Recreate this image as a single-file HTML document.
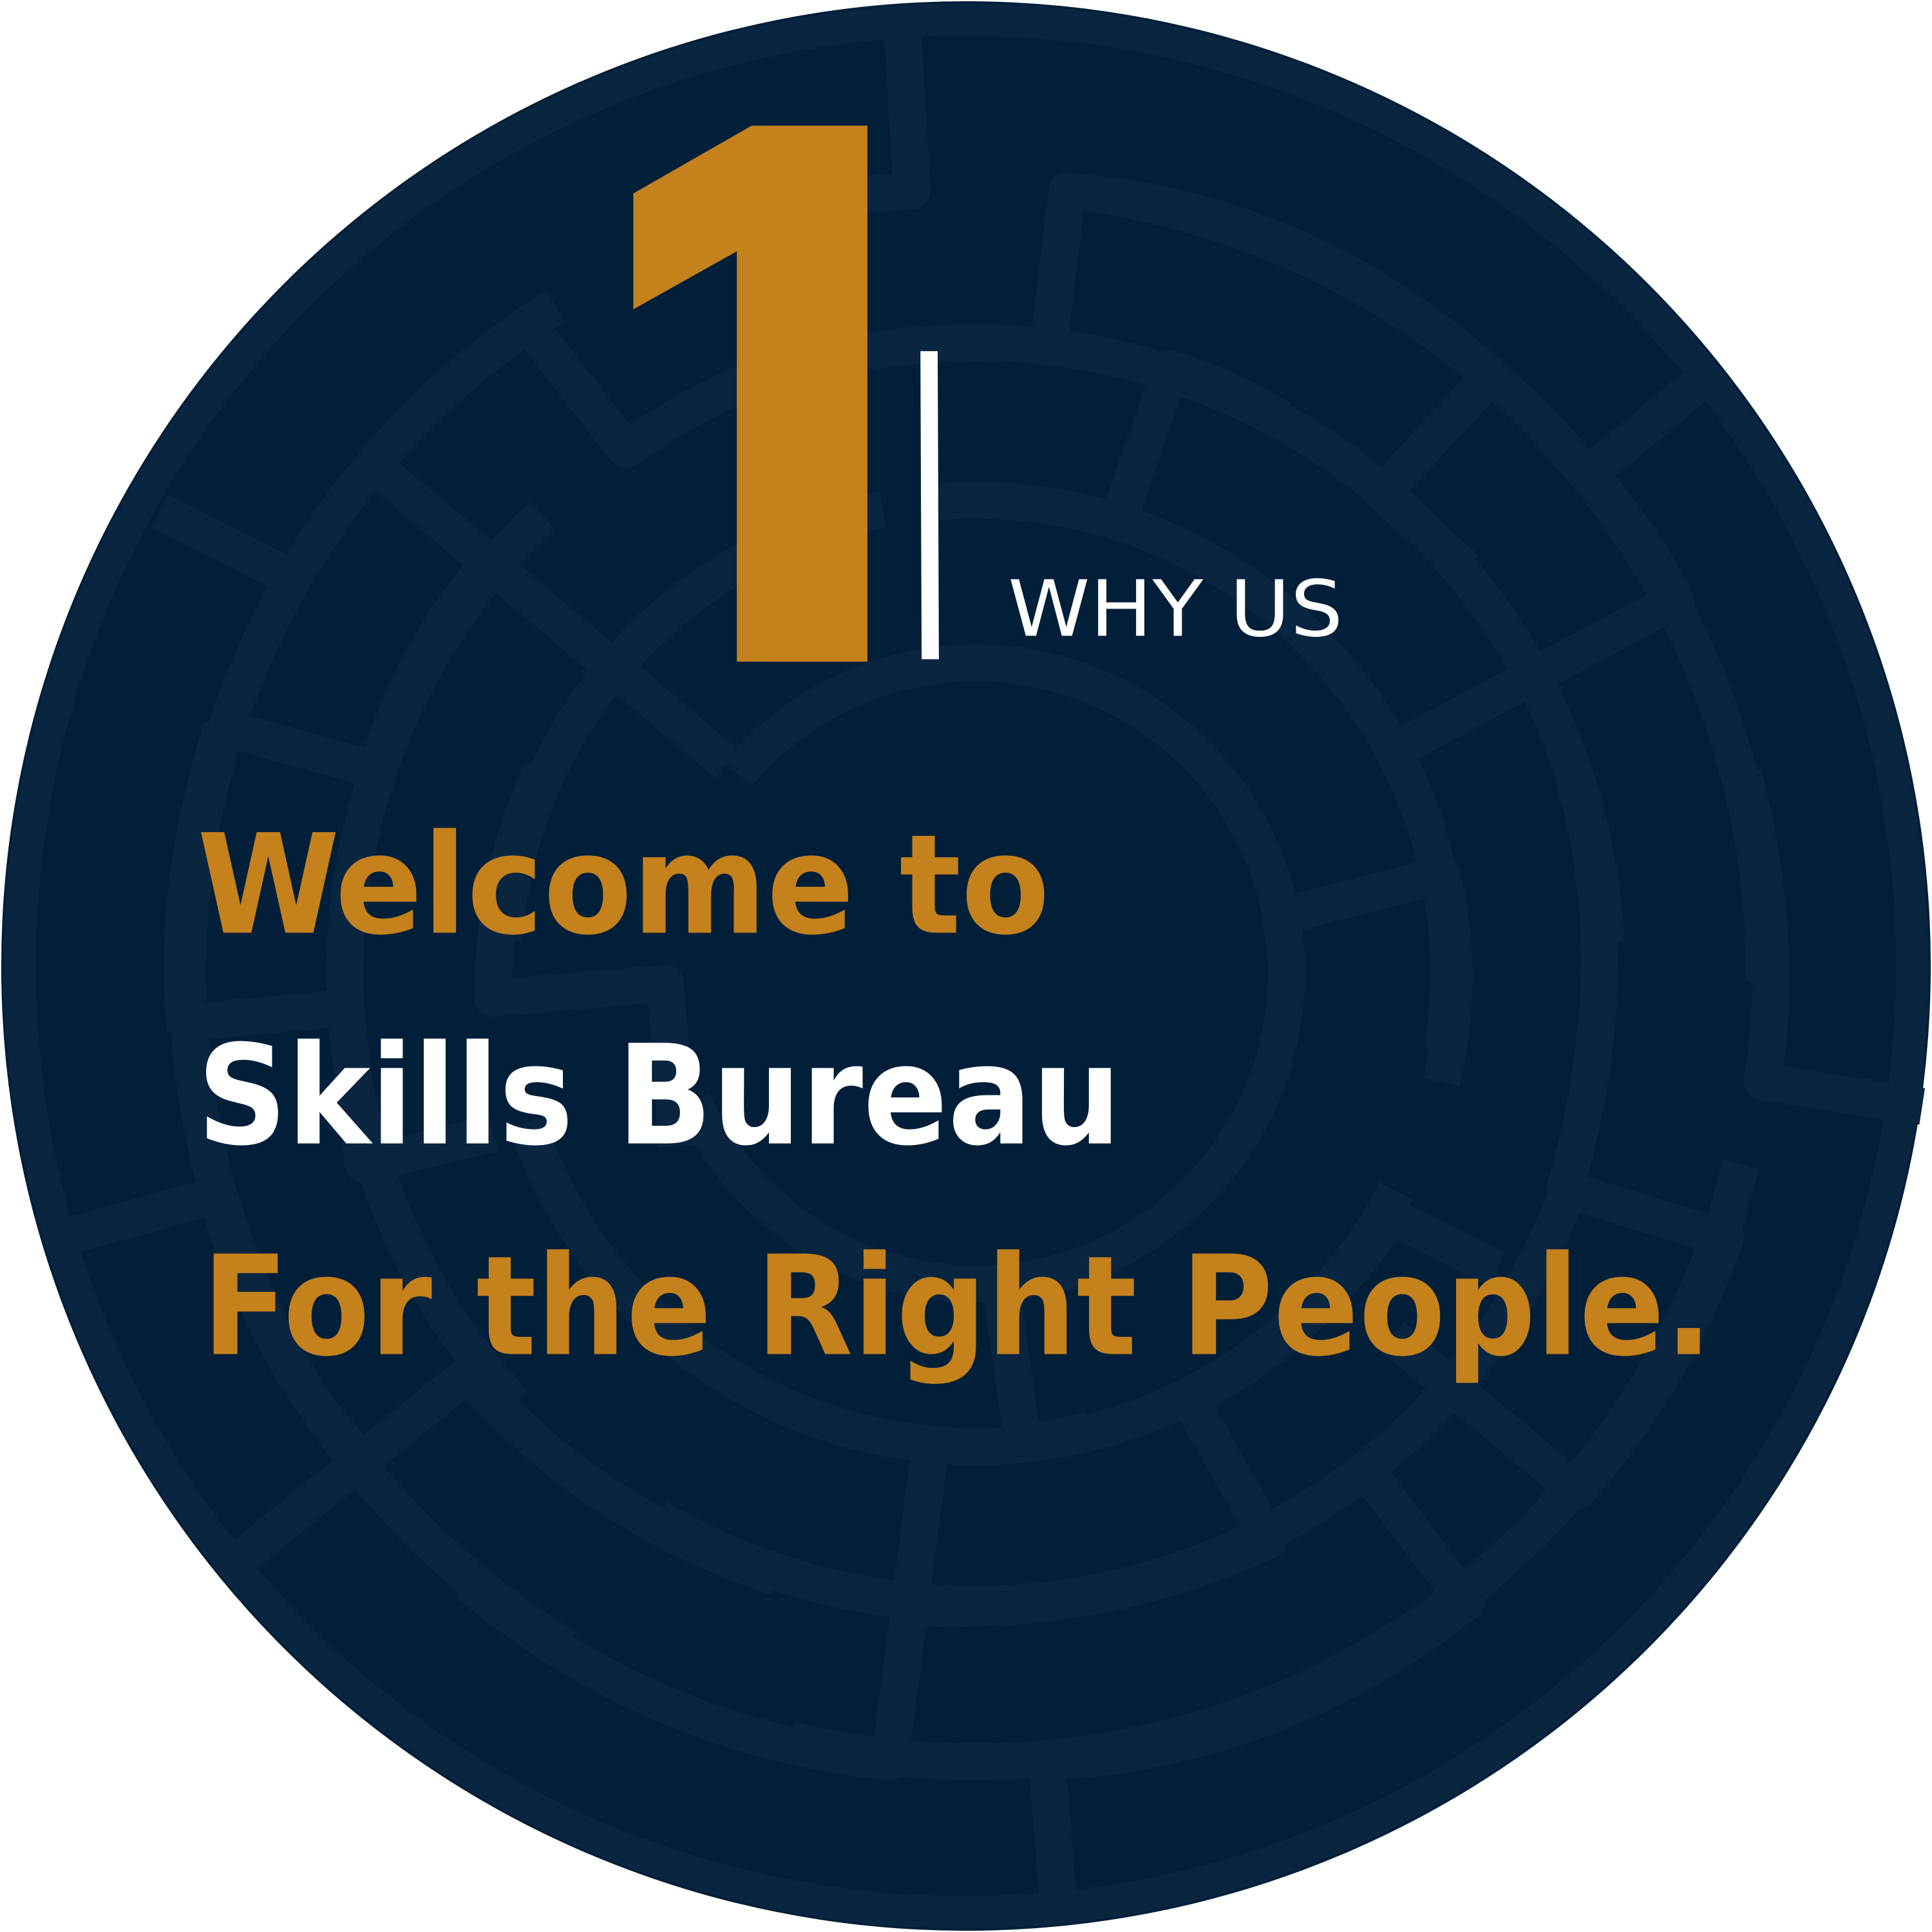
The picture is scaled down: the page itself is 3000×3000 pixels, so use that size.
<!DOCTYPE html>
<html><head><meta charset="utf-8"><style>
html,body{margin:0;padding:0;background:#fff;}
svg{display:block;}
</style></head><body>
<svg width="3000" height="3000" viewBox="0 0 1568 1568" xmlns="http://www.w3.org/2000/svg">
<rect width="1568" height="1568" fill="#fff"/>
<circle cx="784" cy="784" r="783" fill="#021f39"/>
<circle cx="784" cy="784" r="768" fill="none" stroke="#0a2540" stroke-width="26"/>
<g fill="none" stroke="#0a2540" stroke-width="30" stroke-linejoin="round">
<circle cx="792" cy="790" r="252" stroke-dasharray="1300 283" transform="rotate(-140 792 790)"/>
<circle cx="792" cy="790" r="384" stroke-dasharray="700 120 900 150 500 43" transform="rotate(-95 792 790)"/>
<circle cx="792" cy="790" r="512" stroke-dasharray="600 200 900 150 800 200 367" transform="rotate(-70 792 790)"/>
<circle cx="792" cy="790" r="640" stroke-dasharray="900 150 1000 200 1300 471" transform="rotate(-80 792 790)"/>
<path d="M733 30 L740 155 L700 158"/>
<path d="M850 290 L866 155 Q1060 170 1210 305 L1122 400 L1190 462"/>
<path d="M1040 340 Q990 310 950 300 L912 410"/>
<path d="M300 375 L590 620"/>
<path d="M130 415 L235 468"/>
<path d="M430 265 L508 365 Q600 300 700 282"/>
<path d="M1380 310 L1290 385 Q1330 430 1360 487 L1130 610"/>
<path d="M1035 745 L1170 710 Q1190 790 1170 878"/>
<path d="M1415 628 Q1450 770 1430 878 L1560 898"/>
<path d="M1250 560 Q1335 740 1270 965 L1400 1005 Q1360 1120 1280 1210 L1130 1085"/>
<path d="M1110 1195 L1190 1300 Q1040 1420 850 1430 L860 1560"/>
<path d="M1125 985 L1215 1030"/>
<path d="M1130 985 Q1060 1090 965 1135 L1030 1250 Q900 1310 750 1305"/>
<path d="M755 1175 L722 1430 Q530 1410 380 1285"/>
<path d="M630 1280 Q480 1230 380 1115 L195 1265"/>
<path d="M50 1005 L175 970 Q220 1110 290 1180"/>
<path d="M180 590 L305 625 Q340 520 395 460"/>
<path d="M180 590 Q140 720 150 830 L280 818 L295 945 L400 920"/>
<path d="M440 625 Q400 710 400 810 L540 798 L550 930"/>
<path d="M810 1030 L830 1170 Q860 1168 885 1160"/>
<path d="M505 535 Q530 505 565 480"/>
</g>
<polygon points="514,157 610,102 704,102 704,537 598,537 598,204 514,251" fill="#c4811c"/>
<polygon points="747,285 761,285 762,535 748,535" fill="#fff"/>
<text x="818" y="516" font-family="DejaVu Sans, Liberation Sans, sans-serif" font-size="63" fill="#fff" textLength="272" lengthAdjust="spacingAndGlyphs">WHY US</text>
<g font-family="DejaVu Sans, Liberation Sans, sans-serif" font-weight="bold" font-size="112">
<text x="160" y="757" fill="#c4811c" textLength="692" lengthAdjust="spacingAndGlyphs">Welcome to</text>
<text x="160" y="928" fill="#fff" textLength="750" lengthAdjust="spacingAndGlyphs">Skills Bureau</text>
<text x="164" y="1099" fill="#c4811c" textLength="1226" lengthAdjust="spacingAndGlyphs">For the Right People.</text>
</g>
</svg>
</body></html>
